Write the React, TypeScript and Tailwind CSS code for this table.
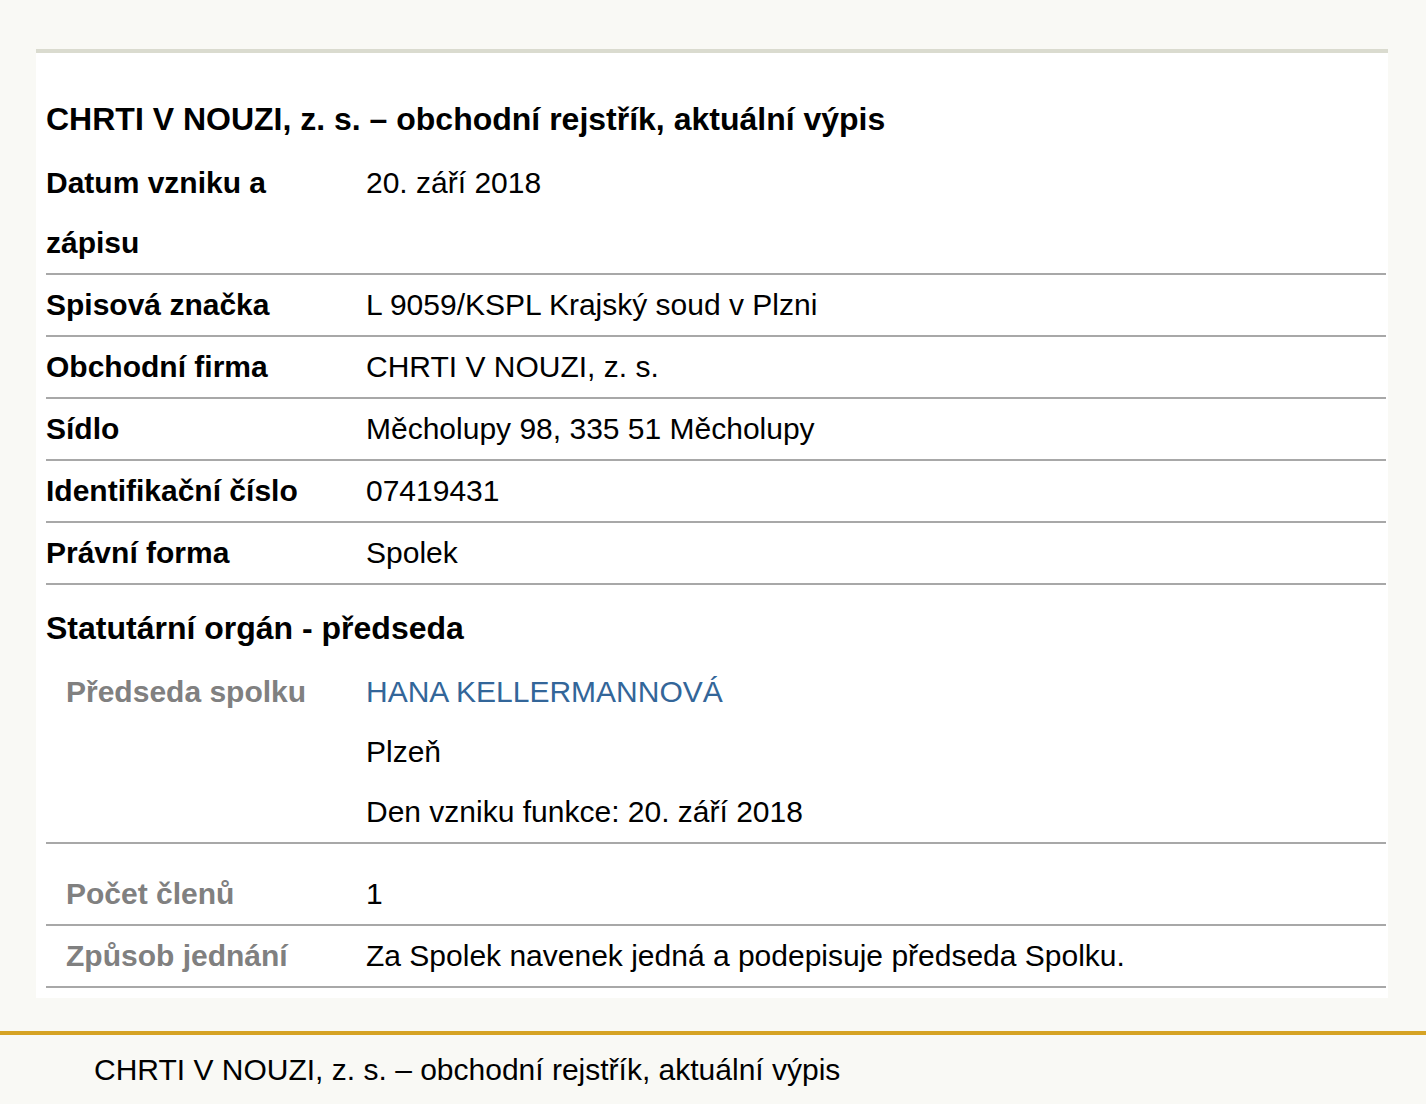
const rows: { label: string; value: string }[] = [
  { label: "Datum vzniku a zápisu", value: "20. září 2018" },
  { label: "Spisová značka", value: "L 9059/KSPL Krajský soud v Plzni" },
  { label: "Obchodní firma", value: "CHRTI V NOUZI, z. s." },
  { label: "Sídlo", value: "Měcholupy 98, 335 51 Měcholupy" },
  { label: "Identifikační číslo", value: "07419431" },
  { label: "Právní forma", value: "Spolek" },
];

export default function App() {
  return (
    <div className="min-h-[1104px] bg-[#f9f9f5] pt-[49px] text-black font-['Liberation_Sans',Arial,sans-serif]">
      <div className="ml-[36px] w-[1352px] bg-white border-t-4 border-[#dadbcf] pt-[36px] pb-[10px] pl-[10px] pr-[2px]">
        <h1 className="text-[32px] font-bold leading-[60px] mb-[4px]">
          CHRTI V NOUZI, z. s. – obchodní rejstřík, aktuální výpis
        </h1>

        {rows.map((r) => (
          <div
            key={r.label}
            className="grid grid-cols-[320px_1fr] border-b-2 border-[#a8a8a8] text-[30px] leading-[60px]"
          >
            <div className="font-bold pr-[10px]">{r.label}</div>
            <div>{r.value}</div>
          </div>
        ))}

        <h2 className="h-[77px] pt-[13px] text-[32px] font-bold leading-[60px]">
          Statutární orgán - předseda
        </h2>

        <div className="grid grid-cols-[320px_1fr] border-b-2 border-[#a8a8a8] text-[30px] leading-[60px]">
          <div className="pl-[20px] font-bold text-[#808080]">Předseda spolku</div>
          <div>
            <div className="text-[#336699]">HANA KELLERMANNOVÁ</div>
            <div>Plzeň</div>
            <div>Den vzniku funkce: 20. září 2018</div>
          </div>
        </div>

        <div className="grid grid-cols-[320px_1fr] border-b-2 border-[#a8a8a8] pt-[20px] text-[30px] leading-[60px]">
          <div className="pl-[20px] font-bold text-[#808080]">Počet členů</div>
          <div>1</div>
        </div>

        <div className="grid grid-cols-[320px_1fr] border-b-2 border-[#a8a8a8] text-[30px] leading-[60px]">
          <div className="pl-[20px] font-bold text-[#808080]">Způsob jednání</div>
          <div>Za Spolek navenek jedná a podepisuje předseda Spolku.</div>
        </div>
      </div>

      <footer className="mt-[33px] border-t-4 border-[#d6a324] pt-[5px] pl-[94px] pb-[9px] text-[30px] leading-[60px]">
        CHRTI V NOUZI, z. s. – obchodní rejstřík, aktuální výpis
      </footer>
    </div>
  );
}
